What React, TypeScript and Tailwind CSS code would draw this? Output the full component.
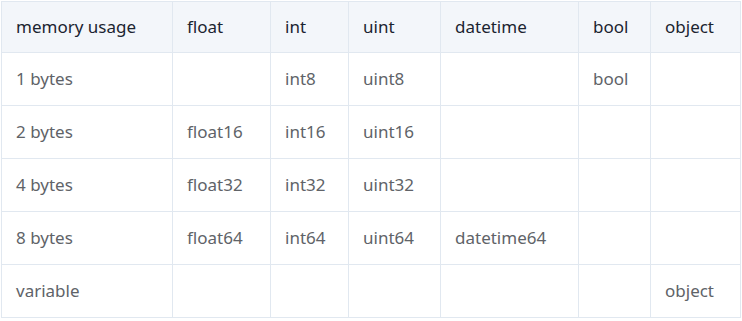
import React from 'react';

const headers = ['memory usage', 'float', 'int', 'uint', 'datetime', 'bool', 'object'];
const widths = ['w-[171px]', 'w-[98px]', 'w-[78px]', 'w-[92px]', 'w-[138px]', 'w-[72px]', 'w-[90px]'];

const rows = [
  ['1 bytes', '', 'int8', 'uint8', '', 'bool', ''],
  ['2 bytes', 'float16', 'int16', 'uint16', '', '', ''],
  ['4 bytes', 'float32', 'int32', 'uint32', '', '', ''],
  ['8 bytes', 'float64', 'int64', 'uint64', 'datetime64', '', ''],
  ['variable', '', '', '', '', '', 'object'],
];

export default function App() {
  return (
    <div className="w-[742px] h-[321px] bg-white p-px" style={{ fontFamily: '"Noto Sans", sans-serif' }}>
      <table className="border-collapse table-fixed w-[740px] text-[17px]">
        <colgroup>
          {widths.map((w, i) => (
            <col key={i} className={w} />
          ))}
        </colgroup>
        <thead>
          <tr className="bg-[#f3f6fa] h-[51px]">
            {headers.map((h) => (
              <th key={h} className="border border-[#e1e8f0] px-[14px] text-left font-normal text-[#1b2430]">
                {h}
              </th>
            ))}
          </tr>
        </thead>
        <tbody>
          {rows.map((r, i) => (
            <tr key={i} className="h-[53px]">
              {r.map((c, j) => (
                <td key={j} className="border border-[#e1e8f0] px-[14px] text-[#606368]">
                  {c}
                </td>
              ))}
            </tr>
          ))}
        </tbody>
      </table>
    </div>
  );
}
